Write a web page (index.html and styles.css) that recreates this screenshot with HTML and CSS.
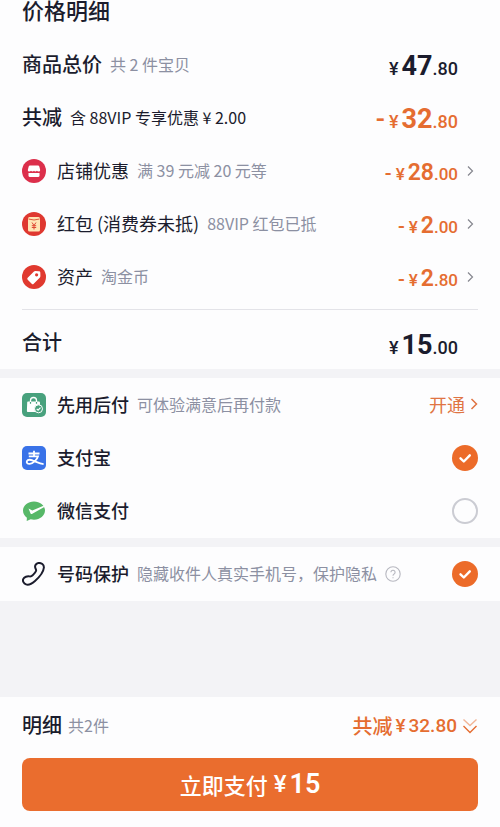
FILE: index.html
```html
<!DOCTYPE html>
<html lang="zh-CN">
<head>
<meta charset="utf-8">
<meta name="viewport" content="width=device-width, initial-scale=1">
<title>价格明细</title>
<link rel="stylesheet" href="styles.css">
</head>
<body>
<main>
  <section class="panel prices">
    <h1 class="title">价格明细</h1>
    <div class="row">
      <h2 class="heading">商品总价</h2><span class="note">共 2 件宝贝</span>
      <span class="price large"><small>¥</small><b>47</b><small>.80</small></span>
    </div>
    <div class="row">
      <h2 class="heading">共减</h2><span class="note dark">含 88VIP 专享优惠 ¥ 2.00</span>
      <span class="price large orange"><i>-</i><small>¥</small><b>32</b><small>.80</small></span>
    </div>
    <a class="row" href="#shop">
      <svg class="icon" viewBox="0 0 24 24"><circle cx="12" cy="12" r="12" fill="#dc2f4b"/><path d="M8 6.500h8q1 0 1.300 1l.9 3.500q0 1.500-1.600 1.500-1.200 0-1.700-.7-.6.700-1.500.700t-1.400-.7q-.6.700-1.500.700t-1.500-.7q-.5.700-1.600.700-1.700 0-1.600-1.500l.9-3.500Q7 6.500 8 6.500Z" fill="#fff"/><path d="M6.500 14h11v2.500q0 1.500-1.500 1.500H8q-1.500 0-1.500-1.500Z" fill="#fff"/></svg>
      <span class="label">店铺优惠</span><span class="note">满 39 元减 20 元等</span>
      <span class="price orange"><i>-</i><small>¥</small><b>28</b><small>.00</small></span>
      <svg class="chevron" viewBox="0 0 8 12"><path d="M2 1.500 6.500 6 2 10.500"/></svg>
    </a>
    <a class="row" href="#redpacket">
      <svg class="icon" viewBox="0 0 24 24"><circle cx="12" cy="12" r="12" fill="#df3830"/><rect x="6" y="5" width="12" height="14.500" rx="1.500" fill="#ffe5b5"/><path d="M6.500 7q5.500 2 11 0" fill="none" stroke="#df5a3c" stroke-width="1"/><path d="m10 10.500 2 3 2-3M9.800 13.700h4.400M9.800 15.500h4.400M12 13.500V17.500" fill="none" stroke="#df4a35" stroke-width="1"/></svg>
      <span class="label">红包 (消费券未抵)</span><span class="note">88VIP 红包已抵</span>
      <span class="price orange"><i>-</i><small>¥</small><b>2</b><small>.00</small></span>
      <svg class="chevron" viewBox="0 0 8 12"><path d="M2 1.500 6.500 6 2 10.500"/></svg>
    </a>
    <a class="row" href="#assets">
      <svg class="icon" viewBox="0 0 24 24"><circle cx="12" cy="12" r="12" fill="#e0392f"/><path d="m5.700 12.700 6-6q.7-.7 1.600-.7l3.700.2q1.300.1 1.300 1.300l.1 3.500q0 1-.7 1.700l-6 6q-1 1-2 0l-4-4q-1-1 0-2Z" fill="#fff"/><circle cx="14.600" cy="9.800" r="1.600" fill="#e0392f"/></svg>
      <span class="label">资产</span><span class="note">淘金币</span>
      <span class="price orange"><i>-</i><small>¥</small><b>2</b><small>.80</small></span>
      <svg class="chevron" viewBox="0 0 8 12"><path d="M2 1.500 6.500 6 2 10.500"/></svg>
    </a>
    <div class="row total">
      <h2 class="heading">合计</h2>
      <span class="price large"><small>¥</small><b>15</b><small>.00</small></span>
    </div>
  </section>

  <section class="panel">
    <div class="row">
      <svg class="icon" viewBox="0 0 24 24"><rect width="24" height="24" rx="5" fill="#48a17d"/><path d="M8.500 9V7.500a3 3 0 0 1 6 0V9" fill="none" stroke="#fff" stroke-width="1.300"/><path d="M6 8.500h11q.8 0 .9.800L18.500 19H5.800q-1 0-.9-1l.3-8.700q0-.8.800-.8Z" fill="#fff"/><path d="M8.500 9v1.700M14.500 9v1.700" stroke="#48a17d" stroke-width="1.200"/><circle cx="16.500" cy="15.800" r="4" fill="#48a17d" stroke="#fff" stroke-width="1"/><path d="m14.700 15.800 1.400 1.400 2.400-2.600" fill="none" stroke="#fff" stroke-width="1.200"/></svg>
      <span class="label strong">先用后付</span><span class="note">可体验满意后再付款</span>
      <a class="open" href="#open">开通<svg class="chevron" viewBox="0 0 8 12"><path d="M1.500 1 6.500 6l-5 5"/></svg></a>
    </div>
    <label class="row" for="alipay">
      <svg class="icon" viewBox="0 0 24 24"><rect width="24" height="24" rx="5" fill="#3972e8"/><path d="M6.500 7.500h11M12 4.800v5.400M6.800 10.300h9.200c-.8 3.200-4.600 7.300-8.300 7.500-2.400.1-3.400-1.300-2.800-2.600.8-1.600 3.600-1.600 6.200-.5 3.700 1.400 7 3 10.500 3.400" fill="none" stroke="#fff" stroke-width="1.800"/></svg>
      <span class="label strong">支付宝</span>
      <span class="choice"><input type="radio" name="pay" id="alipay" checked><svg viewBox="0 0 26 26"><path d="m8.500 13.300 3.300 3.200 6-6.200"/></svg></span>
    </label>
    <label class="row" for="wechat">
      <svg class="icon" viewBox="0 0 24 24"><path d="M12 2.500c6.100 0 11 4 11 9s-4.900 9.200-11 9.200c-1.200 0-2.300-.1-3.300-.4L4.700 22l.2-3.300C2.500 17 1 14.500 1 11.500c0-5 4.900-9 11-9Z" fill="#57b868"/><path d="m6.500 9.500 2.200 5.200q.3.700 1.200.2L22.300 8l-.8-1.200L10.300 11.500Z" fill="#fff"/></svg>
      <span class="label strong">微信支付</span>
      <span class="choice"><input type="radio" name="pay" id="wechat"><svg viewBox="0 0 26 26"><path d="m8.500 13.300 3.300 3.200 6-6.200"/></svg></span>
    </label>
  </section>

  <section class="panel">
    <div class="row">
      <svg class="icon" viewBox="0 0 24 24"><path d="M16.300 1C19.500.6 22 2.700 21.900 5.500 21.600 9 17.500 15 13 19c-3.200 2.800-6.400 4.300-9 3.400-2.300-.8-3.600-3.500-2.800-5.300.9-2 4.300-3.300 6.200-2.700 1.600.5 2 .2 3.500-1.400 1.300-1.400 2.500-2.500 3.100-4 .5-1.200-.4-2-.8-3.500-.5-2 .9-4.200 3.100-4.500Z" fill="none" stroke="#1b1c2d" stroke-width="2" stroke-linejoin="round"/></svg>
      <label class="label strong" for="protect">号码保护</label><span class="note">隐藏收件人真实手机号，保护隐私</span>
      <button class="help" type="button" aria-label="帮助"><svg viewBox="0 0 16 16"><circle cx="8" cy="8" r="7.200"/><path d="M5.900 6.300a2.100 2.100 0 1 1 3.200 1.800Q8 8.700 8 9.700M8 11.200v1.100"/></svg></button>
      <span class="choice"><input type="checkbox" id="protect" checked><svg viewBox="0 0 26 26"><path d="m8.500 13.300 3.300 3.200 6-6.200"/></svg></span>
    </div>
  </section>
</main>

<footer class="footer">
  <div class="summary">
    <h2 class="heading">明细</h2><span class="note">共2件</span>
    <button class="saved" type="button">共减<span>¥</span><b>32.80</b><svg viewBox="0 0 16 16"><path d="m1.500 1.500 6.500 6 6.500-6" opacity=".5"/><path d="m1.500 8 6.500 6.500L14.500 8"/></svg></button>
  </div>
  <button class="pay" type="button">立即支付<span>¥</span><b>15</b></button>
</footer>
</body>
</html>
```
FILE: styles.css
```css
* {
  box-sizing: border-box;
}

body {
  margin: 0;
  min-height: 100vh;
  display: flex;
  flex-direction: column;
  justify-content: space-between;
  background: #f3f3f6;
  color: #1b1c2d;
  font-family: "Noto Sans CJK SC", sans-serif;
  font-size: 18px;
}

main {
  display: flex;
  flex-direction: column;
  gap: 9px;
}

h1,
h2 {
  margin: 0;
  font-weight: 500;
}

a {
  color: inherit;
  text-decoration: none;
}

button {
  border: 0;
  padding: 0;
  background: none;
  color: inherit;
  font-family: inherit;
}

.panel {
  padding: 0 22px 1px;
  background: #fdfdfe;
}

.title {
  height: 38px;
  font-size: 22px;
  line-height: 18px;
}

.row {
  display: flex;
  align-items: center;
  height: 53px;
  white-space: nowrap;
}

.total {
  height: 59px;
  margin-top: 6px;
  padding-top: 8px;
  border-top: 1px solid #e3e3e8;
}

.heading {
  font-size: 20px;
  line-height: 28px;
  padding-bottom: 2px;
}

.label,
.note {
  padding-bottom: 2px;
}

.icon {
  width: 24px;
  height: 24px;
  margin-right: 11px;
}

.strong {
  font-weight: 500;
}

.note {
  margin-left: 8px;
  color: #8c90a2;
  font-size: 16px;
}

.dark {
  color: #1b1c2d;
}

.price {
  display: flex;
  align-items: baseline;
  margin-left: auto;
  padding-top: 6px;
  font-family: Roboto, sans-serif;
  font-weight: 500;
  line-height: 32px;
}

.price b {
  margin-left: 3px;
  font-size: 23px;
  font-weight: 600;
}

.price small {
  font-size: 17px;
}

.price i {
  margin-right: 4px;
  font-size: 20px;
  font-style: normal;
}

.large {
  margin-right: 20px;
}

.large b {
  font-size: 27px;
  font-weight: 700;
}

.large small {
  font-size: 18px;
}

.large i {
  font-size: 27px;
}

.orange {
  color: #e56d31;
}

.chevron {
  width: 8px;
  height: 12px;
  fill: none;
  stroke: #85868e;
  stroke-width: 1.2;
}

.price + .chevron {
  margin: 0 4px 0 8px;
}

.open {
  display: flex;
  align-items: center;
  gap: 5px;
  margin-left: auto;
  padding-bottom: 2px;
  color: #e07443;
}

.open .chevron {
  stroke: #e07443;
  stroke-width: 1.5;
}

.choice {
  display: grid;
  width: 26px;
  height: 26px;
  margin-left: auto;
}

.choice > * {
  grid-area: 1 / 1;
}

.choice input {
  appearance: none;
  width: 26px;
  height: 26px;
  margin: 0;
  border: 2px solid #cbccd3;
  border-radius: 50%;
}

.choice input:checked {
  border: 0;
  background: #ec6b29;
}

.choice svg {
  display: none;
  pointer-events: none;
  fill: none;
  stroke: #fff;
  stroke-width: 2.4;
  stroke-linecap: round;
  stroke-linejoin: round;
}

.choice input:checked + svg {
  display: block;
}

.help {
  width: 16px;
  height: 16px;
  margin-left: 8px;
}

.help svg {
  display: block;
  fill: none;
  stroke: #b7b8c0;
  stroke-width: 1.1;
}

.footer {
  padding: 0 22px 16px;
  background: #fdfdfe;
}

.summary {
  display: flex;
  align-items: center;
  height: 61px;
  padding-bottom: 4px;
}

.summary .note {
  margin-left: 6px;
}

.saved {
  display: flex;
  align-items: center;
  gap: 3px;
  margin-left: auto;
  color: #e56d31;
  font-size: 20px;
  font-weight: 500;
  line-height: 28px;
}

.saved span,
.saved b {
  font-family: Roboto, sans-serif;
  font-size: 19px;
  font-weight: 500;
}

.saved svg {
  width: 16px;
  height: 16px;
  margin-left: 2px;
  fill: none;
  stroke: #e56d31;
  stroke-width: 1.4;
}

.pay {
  display: flex;
  align-items: center;
  justify-content: center;
  width: 100%;
  height: 53px;
  padding-bottom: 2px;
  border-radius: 8px;
  background: #ea6d2e;
  color: #fff;
  font-size: 22px;
  font-weight: 500;
  line-height: 30px;
}

.pay span,
.pay b {
  font-family: Roboto, sans-serif;
}

.pay span {
  margin-left: 6px;
  font-size: 24px;
}

.pay b {
  margin-left: 3px;
  font-size: 27px;
  font-weight: 600;
}
```
